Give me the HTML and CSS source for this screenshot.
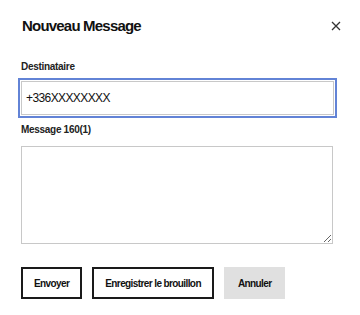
FILE: index.html
```html
<!DOCTYPE html>
<html lang="fr">
<head>
<meta charset="utf-8">
<link rel="stylesheet" href="styles.css">
</head>
<body>
<div class="modal">
  <div class="header">
    <h1 class="title">Nouveau Message</h1>
    <button class="close" aria-label="Fermer">
      <svg width="10" height="10" viewBox="0 0 10 10"><path d="M1 1L9 9M9 1L1 9" stroke="#333" stroke-width="1.3" fill="none"/></svg>
    </button>
  </div>
  <label class="label label-dest">Destinataire</label>
  <input class="field" type="text" value="+336XXXXXXXX">
  <label class="label label-msg">Message 160(1)</label>
  <textarea class="area"></textarea>
  <div class="actions">
    <button class="btn">Envoyer</button>
    <button class="btn">Enregistrer le brouillon</button>
    <button class="btn btn-grey">Annuler</button>
  </div>
</div>
</body>
</html>
```
FILE: styles.css
```css
html, body { margin: 0; padding: 0; background: #fff; }
body { font-family: "Liberation Sans", Arial, sans-serif; color: #111; width: 360px; height: 315px; overflow: hidden; }
.modal { padding: 17px 0 0 21px; display: flex; flex-direction: column; align-items: flex-start; }
.header { display: flex; justify-content: space-between; align-items: center; width: 320px; height: 18px; }
.title { margin: 0; font-size: 15px; line-height: 18px; font-weight: bold; color: #111; padding-left: 1px; letter-spacing: -0.8px; }
.close { border: 0; background: none; padding: 0; width: 10px; height: 10px; display: flex; cursor: pointer; }
.label { display: block; font-size: 10px; line-height: 12px; font-weight: bold; color: #222; letter-spacing: -0.3px; }
.label-dest { margin-top: 26px; }
.field { box-sizing: border-box; margin: 8px 0 0 0; width: 313px; height: 34px; border: 1px solid #c8c8c8; padding: 0 4px; font-family: "Liberation Sans", Arial, sans-serif; font-size: 12px; letter-spacing: -0.6px; color: #111; outline: none; box-shadow: 0 0 0 1px #fff, 0 0 0 3px #6283d6; }
.label-msg { margin-top: 9px; }
.area { box-sizing: border-box; margin: 10px 0 0 0; width: 312px; height: 98px; border: 1px solid #c8c8c8; resize: both; font-family: "Liberation Sans", Arial, sans-serif; }
.actions { display: flex; gap: 10px; margin-top: 23px; }
.btn { box-sizing: border-box; height: 32px; padding: 0 11px; border: 2px solid #1a1a1a; background: #fff; font-family: "Liberation Sans", Arial, sans-serif; font-size: 10px; letter-spacing: -0.6px; font-weight: bold; color: #111; }
.btn-grey { background: #e0e0e0; border-color: #e0e0e0; padding: 0 12px; }
```
